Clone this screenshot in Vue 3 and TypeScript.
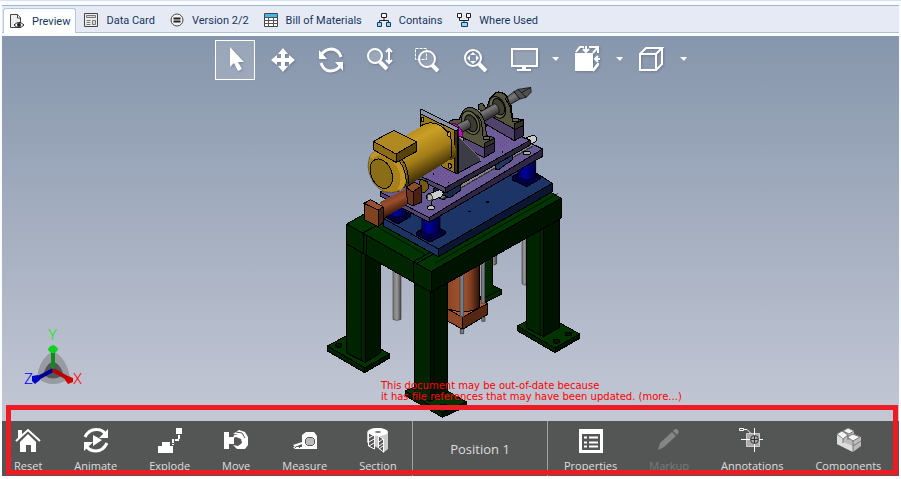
<script setup lang="ts">
import { ref } from 'vue'

interface Item {
  label: string
  icon: string
  disabled?: boolean
}

const activeTab = ref('Preview')
const activeTool = ref('Select')

const tabs: Item[] = [
  {
    label: 'Preview',
    icon: '<path d="M1.500 1.500h7l3 3v10h-10z" fill="#eee" stroke="#444"/><path d="M8.500 1.500v3.500h3" fill="#fff" stroke="#444"/><path d="M5 12q5-5 10 0q-5 5-10 0z" fill="#fff" stroke="#222"/><circle cx="10" cy="12" r="2" fill="#222"/>',
  },
  {
    label: 'Data Card',
    icon: '<path d="M1.500 1.500h13v13h-13z" fill="#eee" stroke="#444"/><path d="M3.500 3.500h9v2h-9zM3.500 8.500h4M3.500 10.500h4M3.500 12.500h4M9.500 8.500h3v4h-3z" fill="#ddd" stroke="#777"/>',
  },
  {
    label: 'Version 2/2',
    icon: '<circle cx="8" cy="8" r="6" fill="#f4f4f4" stroke="#444"/><path d="M4.500 6.500h7M4.500 9.500h7" stroke="#222" stroke-width="2"/>',
  },
  {
    label: 'Bill of Materials',
    icon: '<path d="M1.500 1.500h13v13h-13z" fill="#fff" stroke="#444"/><path d="M2 2h12v3H2z" fill="#45b5e5"/><path d="M1.500 5.500h13M1.500 8.500h13M1.500 11.500h13M5.500 5v10M10.500 5v10" stroke="#555"/>',
  },
  {
    label: 'Contains',
    icon: '<path d="M8 6v3M3.500 11V8.500h9V11" fill="none" stroke="#222"/><path d="M5.500 1.500h5v4h-5z" fill="#fff" stroke="#222"/><path d="M1.500 10.500h4v4h-4zM10.500 10.500h4v4h-4z" fill="#8fd8f8" stroke="#12405c"/>',
  },
  {
    label: 'Where Used',
    icon: '<path d="M3.500 6v2.500h9V6M8 9v2" fill="none" stroke="#222"/><path d="M1.500 1.500h4v4h-4zM10.500 1.500h4v4h-4z" fill="#fff" stroke="#222"/><path d="M5.500 10.500h6v4h-6z" fill="#8fd8f8" stroke="#12405c"/>',
  },
]

const tools: Item[] = [
  { label: 'Select', icon: '<path d="M15 7v20l4-4 4 8 4-2-4-7h6z" fill="#fff"/>' },
  {
    label: 'Pan',
    icon: '<path d="M20 8l5 6h-3v4h4v-3l6 5-6 5v-3h-4v4h3l-5 6-5-6h3v-4h-4v3l-6-5 6-5v3h4v-4h-3z" fill="#fff"/>',
  },
  {
    label: 'Rotate',
    icon: '<path d="M10 15q4-6 11-6q7 1 9 8M30 25q-4 6-11 6q-6 0-9-8" fill="none" stroke="#fff" stroke-width="3"/><path d="M8 10v9h8zM32 31v-9h-8z" fill="#fff"/>',
  },
  {
    label: 'Zoom',
    icon: '<circle cx="16" cy="16" r="7" fill="#ffffff33" stroke="#fff" stroke-width="2"/><path d="M21 22l7 7" stroke="#fff" stroke-width="4"/><path d="M30 10v12M27 12l3-3 3 3M27 20l3 3 3-3" fill="none" stroke="#fff" stroke-width="2"/>',
  },
  {
    label: 'Zoom to area',
    icon: '<circle cx="20" cy="19" r="8" fill="#ffffff22" stroke="#fff" stroke-width="2"/><path d="M25 25l6 6" stroke="#fff" stroke-width="4"/><path d="M8.500 8.500h11v11h-11z" fill="none" stroke="#fff" stroke-dasharray="3 1"/>',
  },
  {
    label: 'Zoom to fit',
    icon: '<circle cx="18" cy="18" r="8" fill="none" stroke="#fff" stroke-width="2"/><path d="M18 12l3 3h-6zM18 24l3-3h-6zM12 18l3-3v6zM24 18l-3-3v6z" fill="#fff"/><path d="M24 24l7 7" stroke="#fff" stroke-width="4"/>',
  },
]

const views: Item[] = [
  {
    label: 'Display',
    icon: '<path d="M9 9h25v17H9z" fill="#ffffff22" stroke="#fff" stroke-width="2"/><path d="M19 27h4v2h5v2H14v-2h5z" fill="#fff"/>',
  },
  {
    label: 'View orientation',
    icon: '<path d="M8 13h18v18H8z" fill="#fff"/><path d="M9 12l4-5h4M22 7h9v6M31 23v2l-5 6M26 13l5-6M26 30l5-6" fill="none" stroke="#fff" stroke-width="2"/><path d="M19 6v5M16 9l3 3 3-3M33 19h-5M31 16l-3 3 3 3" fill="none" stroke="#fff" stroke-width="2"/>',
  },
  {
    label: 'Display style',
    icon: '<path d="M9 14h16v16H9zM9 14l6-6h16l-6 6M31 8v16l-6 6" fill="none" stroke="#fff" stroke-width="2"/>',
  },
]

const motion: Item[] = [
  {
    label: 'Reset',
    icon: '<path d="M1 14L13 3l12 11" fill="none" stroke="#fff" stroke-width="2"/><path d="M3 3h4v5l-4 3zM5 15l8-8 8 8v10h-5v-7h-5v7H5z" fill="#fff"/>',
  },
  {
    label: 'Animate',
    icon: '<path d="M2 10Q6 2 14 2.500q5 0 8 4M24 16q-4 8-11 8q-6 0-9-4" fill="none" stroke="#fff" stroke-width="3"/><path d="M25 2v9h-9zM1 24v-9h9zM10 8l9 5-9 6z" fill="#fff"/>',
  },
  {
    label: 'Explode',
    icon: '<path d="M19 1h6v6h-6zM1 19h4v-4h8v4h3v7H1z" fill="#fff"/><path d="M22 8v5h-6v5" fill="none" stroke="#fff" stroke-width="2" stroke-dasharray="4 1"/>',
  },
  {
    label: 'Move',
    icon: '<path d="M1 5h5v5h5v7H6v5H1zM10 7l6-4 6 2 3 5v8l-3 4h-8l-4-4 5 1 4-3-1-4-5-2-3 1 1-3 4-1z" fill="#fff"/><path d="M13 5l6 1 3 5" fill="none" stroke="#555" />',
  },
  {
    label: 'Measure',
    icon: '<path d="M10 8l4-3h8l3 4v13H10zM1 18l9-3v2l-7 3zM1 20h23v2H3z" fill="#fff"/><path d="M15.500 10.500h5l2 2v4l-2 2h-5l-2-2v-4z" fill="#bbb" stroke="#555"/><path d="M3 21l2-2m2 2l2-2" stroke="#555"/>',
  },
  {
    label: 'Section',
    icon: '<path d="M2 5q2-4 10-4t11 5v16l-5 4V13h-5v8l-4-2v-6L2 16z" fill="#ccc"/><ellipse cx="13" cy="5" rx="10" ry="4" fill="#fff"/><path d="M3.500 6l6 3v13l-6-3zM13.500 9l5 3v13l-5-4z" fill="#555" stroke="#fff"/><path d="M4 11l5-3M4 15l5-3M4 19l5-3M14 15l4-3M14 19l4-3M14 22l4-3" stroke="#fff"/><ellipse cx="13" cy="5" rx="3" ry="1" fill="#777"/>',
  },
]

const details: Item[] = [
  {
    label: 'Properties',
    icon: '<path d="M1 2h24v24H1z" fill="#fff"/><path d="M4 7h18v16H4z" fill="#555"/><path d="M6 10.500h3m2 0h9M6 15.500h3m2 0h9M6 19.500h3m2 0h9" stroke="#fff" stroke-width="2"/>',
  },
  {
    label: 'Markup',
    icon: '<path d="M2 23l2-7L16 5l4 4L8 20zM17 4l2-2h2l2 3-2 3z" fill="#858585"/>',
    disabled: true,
  },
  {
    label: 'Annotations',
    icon: '<path d="M7.500 6.500h13v13h-13z" fill="#aaa" stroke="#ccc"/><path d="M2 12.500h22M15.500 1v24" stroke="#fff"/><circle cx="15.500" cy="12.500" r="4" fill="#aaa" stroke="#333"/><path d="M12 12.500h7M15.500 9v7" stroke="#333"/><path d="M.500 1.500h4v2h-4zM5 2.500h3l4 4" fill="none" stroke="#fff"/>',
  },
  {
    label: 'Components',
    icon: '<path d="M2 7l11-6 6 3v3l7 3v9l-8 6L2 17z" fill="#bbb"/><path d="M2 7l5-3 6 4-5 4zM8 4l5-3 6 3-5 3zM12 10l6-3 7 3-7 4z" fill="#f4f4f4" stroke="#777"/><path d="M2 8l6 4v3l10 4v6L2 17z" fill="#ddd"/><path d="M13 8v5M18 14v11M8 12v4M18 19l8-5" stroke="#777"/>',
  },
]
</script>

<template>
  <main class="app">
    <nav class="tabs">
      <button
        v-for="tab in tabs"
        :key="tab.label"
        class="tab"
        :class="{ active: tab.label === activeTab }"
        @click="activeTab = tab.label"
      >
        <svg class="tab-icon" viewBox="0 0 16 16" v-html="tab.icon"></svg>
        <span>{{ tab.label }}</span>
      </button>
    </nav>

    <section class="viewer">
      <div class="toolbar">
        <button
          v-for="tool in tools"
          :key="tool.label"
          class="tool"
          :class="{ selected: tool.label === activeTool }"
          :aria-label="tool.label"
          @click="activeTool = tool.label"
        >
          <svg viewBox="0 0 40 40" v-html="tool.icon"></svg>
        </button>
        <div v-for="view in views" :key="view.label" class="split">
          <button class="tool" :aria-label="view.label">
            <svg viewBox="0 0 40 40" v-html="view.icon"></svg>
          </button>
          <button class="drop" :aria-label="view.label + ' options'">
            <svg viewBox="0 0 14 40"><path d="M4 17h7l-3 4z" fill="#fff" /></svg>
          </button>
        </div>
      </div>

      <div class="stage">
        <svg class="model" viewBox="-30 6 843 1017" stroke-linejoin="round">
          <defs>
            <linearGradient id="motor" gradientUnits="userSpaceOnUse" x1="250" y1="145" x2="325" y2="285">
              <stop offset="0" stop-color="#a98218" />
              <stop offset=".3" stop-color="#c99f26" />
              <stop offset=".65" stop-color="#a27c18" />
              <stop offset="1" stop-color="#3a2b04" />
            </linearGradient>
            <linearGradient id="copper" x1="0" x2="1">
              <stop offset="0" stop-color="#8a4526" />
              <stop offset=".5" stop-color="#a4552f" />
              <stop offset=".75" stop-color="#7a3c20" />
              <stop offset="1" stop-color="#2e1307" />
            </linearGradient>
            <linearGradient id="arm" gradientUnits="userSpaceOnUse" x1="215" y1="340" x2="240" y2="395">
              <stop offset="0" stop-color="#7a3c20" />
              <stop offset=".4" stop-color="#9a4e2c" />
              <stop offset="1" stop-color="#2e1307" />
            </linearGradient>
            <linearGradient id="steel" x1="0" x2="1">
              <stop offset="0" stop-color="#777" />
              <stop offset=".5" stop-color="#999" />
              <stop offset="1" stop-color="#444" />
            </linearGradient>
            <linearGradient id="shaft" gradientUnits="userSpaceOnUse" x1="490" y1="80" x2="510" y2="118">
              <stop offset="0" stop-color="#555" />
              <stop offset=".35" stop-color="#777" />
              <stop offset="1" stop-color="#222" />
            </linearGradient>
            <linearGradient id="post" x1="0" x2="1">
              <stop offset="0" stop-color="#000060" />
              <stop offset=".4" stop-color="#0000a0" />
              <stop offset="1" stop-color="#000038" />
            </linearGradient>
            <pattern id="dots" width="12" height="12" patternUnits="userSpaceOnUse">
              <path d="M1 2h3M7 8h3" stroke="#86349c" stroke-width="3" />
            </pattern>
          </defs>

          <!-- Stand: rods, cylinder, legs and beams -->
          <g transform="translate(0 420)" stroke="#000" stroke-width="3">
            <g fill="url(#steel)" stroke="#444" stroke-width="2">
              <path d="M219 140v158q11 7 24 0V140z" />
              <path d="M606 30v161q6 6 16 4V30z" />
              <path d="M507 90v42q11 7 23 0V90z" />
            </g>
            <path d="M487 90h30v105l28 14v14l-50 25-15-8 7-30z" fill="#002600" />
            <path d="M495 232l50-24" />
            <path d="M382 120h96v145q-40 20-96 5z" fill="url(#copper)" />
            <path d="M382 267l46 25 75-42-25-15v28q-38 22-96 4z" fill="#b36037" />
            <path d="M382 267l46 25v36l-46-25z" fill="#8e4827" />
            <path d="M428 292l75-42v33l-75 45z" fill="#562813" />
            <g fill="#777b84" stroke="#333" stroke-width="2">
              <path d="M420 120h11v170h-11zM484 100h10v150h-10zM421 328h10v13h-10zM485 292h10v12h-10z" />
            </g>

            <path d="M22 378l60-32 98 40 29 16-75 41z" fill="#003300" />
            <path d="M22 378l112 65v15L22 393z" fill="#002200" />
            <path d="M134 443l75-41v12l-75 44z" fill="#001400" />
            <path d="M80 60h55v367l-55-28z" fill="#002400" />
            <path d="M135 60h45v340l-45 27z" fill="#001500" />
            <path d="M124 95v328" stroke-width="2" />
            <ellipse cx="56" cy="376" rx="10" ry="6" fill="#001800" />

            <path d="M592 318l28-14 98 4 61 34-74 42z" fill="#003300" />
            <path d="M592 318l113 66v14l-113-66z" fill="#002200" />
            <path d="M705 384l74-42v13l-74 43z" fill="#001400" />
            <path d="M620 0h50v350l-50-26z" fill="#002400" />
            <path d="M670 0h49v322l-49 28z" fill="#001200" />
            <path d="M660 25v318" stroke-width="2" />
            <ellipse cx="746" cy="342" rx="10" ry="6" fill="#001800" />
            <ellipse cx="709" cy="364" rx="10" ry="6" fill="#001800" />

            <path d="M255 512l28-10 100 12 57 32-73 31z" fill="#003300" />
            <path d="M255 512l112 65v15l-112-66z" fill="#002200" />
            <path d="M367 577l73-31v13l-73 33z" fill="#001400" />
            <path d="M283 170h47v375l-47-27z" fill="#002400" />
            <path d="M330 170h53v347l-53 28z" fill="#001200" />
            <path d="M342 215v325" stroke-width="2" />
            <ellipse cx="370" cy="558" rx="11" ry="6" fill="#001800" />

            <path d="M80 12l60-34L690-85l33 20-390 220z" fill="#003400" />
            <path d="M80 12l253 143v62L80 72z" fill="#002500" />
            <path d="M333 155L723-65v60L333 217z" fill="#001300" />
            <path d="M130 38l58-30M130 38v60M280 125l54-30M280 125v60M290 130l50-28M138 44v57" />
            <path d="M170 20l150 86M345 130L715-80" stroke-width="2" />
          </g>

          <!-- Base plate -->
          <g stroke="#000" stroke-width="3">
            <path d="M190 415l350-205 157 100-342 197z" fill="#1c3466" />
            <path d="M190 415l165 92v23l-165-92z" fill="#1c3260" />
            <path d="M355 507l342-197v25L355 530z" fill="#0a1632" />
            <path d="M445 395h9M497 366h9" stroke-width="4" />

            <path d="M198 404l36-22 38 20v8l-38 22-36-20z" fill="#00003c" />
            <path d="M208 370v34q25 14 50 0v-34z" fill="url(#post)" stroke-width="2" />
            <path d="M290 456l42-24 44 22v8l-44 24-42-20z" fill="#000048" />
            <path d="M305 395v58q26 20 55 0v-58z" fill="url(#post)" stroke-width="2" />
            <path d="M577 290l42-24 43 22v8l-42 24-43-20z" fill="#000048" />
            <path d="M594 230v59q26 20 53 0v-59z" fill="url(#post)" stroke-width="2" />
            <path d="M300 457h5M330 474h5M362 454h5M587 292h5M618 309h5M649 289h5" stroke-width="7" />

            <!-- Carriage plates and guide rails -->
            <path d="M180 336l340-200 148 71-341 206z" fill="#685a94" />
            <path d="M180 336l147 77v14l-147-79z" fill="#524571" />
            <path d="M327 413l341-206v22L327 427z" fill="#302747" />
            <path d="M340 326l80-42 15 28-65 48-30-14zM515 230l60-30v42l-45 28-15-9z" fill="#182b50" />
            <path d="M360 352l275-160" stroke="#333" stroke-width="18" />
            <path d="M360 350l275-160" stroke="#85858c" stroke-width="14" />
            <path d="M330 352l28-11M625 183l14-6" stroke="#000" stroke-width="25" stroke-linecap="round" />
            <path d="M330 352l28-11M625 183l14-6" stroke="#ccc" stroke-width="19" stroke-linecap="round" />
            <ellipse cx="329" cy="353" rx="8" ry="10" fill="#aaa" stroke="#444" />
            <path d="M333 364v16" />
            <ellipse cx="333" cy="383" rx="11" ry="6" fill="#bbb" />
            <ellipse cx="621" cy="219" rx="11" ry="6" fill="#aaa" />
            <path d="M380 320l40-22v34l-30 21-22-8z" fill="#172a4c" />
            <path d="M525 250l53-29v17l-42 31-11-5z" fill="#203860" />
            <path d="M278 278l225-142 128 44-254 143z" fill="#6c5c98" />
            <path d="M278 278l99 45v16l-99-50z" fill="#52446f" />
            <path d="M377 323l254-143v15L377 339z" fill="#2c243d" />
            <path d="M335 278l35-17 42 31-42 18-35-18zM525 188l35-20 25 14-40 22z" fill="url(#dots)" stroke="none" />
            <path d="M338 282h3M384 307h3M547 216h3M465 250h3M579 181h3" stroke-width="5" />

            <!-- Bearing blocks and spindle -->
            <path d="M475 115l30-20 78 50v37l-78-45z" fill="#51436e" />
            <path d="M583 145l27-18v40l-27 15z" fill="#2d263c" />
            <path d="M475 75l12-6 12 18 10-30q22-35 50-12 17 14 18 70l33 5v12l-27 15-108-60z" fill="#55553e" />
            <path d="M583 132l27-13v18l-27 12z" fill="#303024" />
            <path d="M508 60q25-38 47-15 20 22 24 79" fill="none" />
            <ellipse cx="532" cy="82" rx="23" ry="34" transform="rotate(-25 532 82)" fill="#69694e" />
            <ellipse cx="536" cy="80" rx="16" ry="26" transform="rotate(-25 536 80)" fill="#404032" />
            <path d="M562 50l20-15 18 22-30 17z" fill="url(#shaft)" stroke-width="2" />
            <path d="M582 35l12-7 38-6 2 14-15 16-19 5z" fill="#505050" stroke-width="2" />
            <path d="M594 28l10 10 28-15M604 38l15 14" fill="none" stroke-width="2" />
            <path d="M475 99l49-28q14 7 14 27l-49 29z" fill="url(#shaft)" stroke-width="2" />

            <path d="M430 170l62 30v33l-62-34z" fill="#574878" />
            <path d="M492 200l31-18v33l-31 18z" fill="#2d263c" />
            <path d="M388 124l14-6 16 0q12-42 38-35 27 8 38 42l6 42 22 6v14l-30 17-92-45z" fill="#55553e" />
            <path d="M492 190l31-15v14l-31 15z" fill="#303024" />
            <ellipse cx="452" cy="128" rx="25" ry="37" transform="rotate(-25 452 128)" fill="#68684d" />
            <ellipse cx="453" cy="130" rx="17" ry="27" transform="rotate(-25 453 130)" fill="#3b3b2f" />
            <ellipse cx="500" cy="174" rx="10" ry="6" fill="#6a6a50" />
            <ellipse cx="587" cy="120" rx="10" ry="6" fill="#6a6a50" />
            <path d="M472 105l13 20 3 42M555 55l17 28 2 31" fill="none" />
            <path d="M412 133l30-15q13 8 9 26l-29 15z" fill="url(#shaft)" stroke-width="2" />
            <path d="M392 130q12-3 24 9t12 29l-13 3-22-36z" fill="#d000d0" stroke="#600060" />
            <path d="M414 169l67 65v10l-67 35z" fill="#3b3c45" />
            <path d="M414 169l67 65v10" fill="none" stroke="#777" />

            <!-- Motor -->
            <path d="M302 87l113 56v137l-12-4-90-80-11-90z" fill="#8795a6" />
            <path d="M300 101l108 52v127l-40-19-68-80z" fill="#9b7818" />
            <path d="M403 153l10-4v131l-10-2z" fill="#3b2e08" />
            <path d="M168 215L300 142q55-35 92 30t-6 69L235 335z" fill="url(#motor)" stroke="none" />
            <path d="M300 140q28-20 58-5 27 15 37 48l-2 50" fill="none" />
            <ellipse cx="388" cy="163" rx="5" ry="8" fill="#d0a630" />
            <ellipse cx="308" cy="118" rx="4" ry="7" fill="#d0a630" />
            <ellipse cx="389" cy="258" rx="5" ry="7" fill="#b38d22" />
            <path d="M146 242q4-28 29-30 60-7 82 54 15 48-20 67-48 17-77-25-21-35-14-66z" fill="#a98119" stroke-width="1" />
            <path d="M154 234q14-24 47-10 38 20 46 62 5 28-10 43" fill="none" stroke="#d4aa32" stroke-width="13" opacity=".55" />
            <ellipse cx="184" cy="281" rx="31" ry="46" transform="rotate(-23 184 281)" fill="#8b6c17" />
            <path d="M237 242q25 31 21 76M246 237q24 34 18 76" fill="none" />
            <path d="M160 184l62-33 68 35-62 36z" fill="#b08a20" />
            <path d="M160 184l68 38v25l-68-38z" fill="#8e6c15" />
            <path d="M228 222l62-36v28l-62 34z" fill="#594208" />

            <!-- Linear actuator -->
            <path d="M302 298l20 7 5 20-15 14-20-10z" fill="#76590d" />
            <path d="M180 366l85-42 25 33-97 56z" fill="url(#arm)" stroke="none" />
            <path d="M258 321l25-14 22 11v48l-26 12-16-8z" fill="#6a351e" />
            <path d="M258 321l25-14 22 11-27 18z" fill="#8d4c2d" />
            <path d="M279 335l26-17v48l-26 12z" fill="#4a2010" />
            <path d="M132 370l20-11 37 21-14 10z" fill="#98502d" />
            <path d="M132 370l43 20v50l-43-22z" fill="#80431f" />
            <path d="M175 390l14-10v48l-14 12z" fill="#40200f" />
          </g>
        </svg>

        <svg class="triad" viewBox="0 0 60 60" aria-label="Axis orientation">
          <path d="M29 17Q43 24 46 44Q29 56 13 44Q15 25 29 17z" fill="#999ba3" />
          <path d="M29 27Q38 32 39 41Q29 48 20 41Q20 32 29 27z" fill="#55575c" />
          <path d="M29 17v21" stroke="#128a20" stroke-width="4" />
          <path d="M29 36L14 44" stroke="#000090" stroke-width="4" />
          <path d="M29 36l16 9" stroke="#b80000" stroke-width="4" />
          <path d="M24 16q0-3 5-5 5 2 5 5l-3 3h-4z" fill="#10d020" />
          <path d="M8 42l6-1 2 5-5 4-3-3z" fill="#0000c8" />
          <path d="M44 42l5 2v4l-5 2-3-4z" fill="#d00000" />
          <g font-family="Roboto" font-weight="300" font-size="15">
            <text x="24" y="6" fill="#00f000">Y</text>
            <text x="0" y="50" fill="#0000ff">Z</text>
            <text x="49" y="50" fill="#ff0000">X</text>
          </g>
        </svg>

        <p class="notice">This document may be out-of-date because<br />it has file references that may have been updated. (more...)</p>
      </div>

      <footer class="commands">
        <div class="group">
          <button v-for="item in motion" :key="item.label" class="command">
            <svg viewBox="0 0 26 26" v-html="item.icon"></svg>
            <span>{{ item.label }}</span>
          </button>
        </div>
        <button class="position">Position 1</button>
        <div class="group wide">
          <button v-for="item in details" :key="item.label" class="command" :disabled="item.disabled">
            <svg viewBox="0 0 26 26" v-html="item.icon"></svg>
            <span>{{ item.label }}</span>
          </button>
        </div>
      </footer>
      <div class="highlight"></div>
    </section>
  </main>
</template>

<style>
body {
  margin: 0;
  background: #fff;
}
</style>

<style scoped>
.app {
  padding: 4px 2px 3px;
  border-top: 1px solid #d5e3f5;
  box-sizing: border-box;
  height: 100vh;
  display: flex;
  flex-direction: column;
  font-family: "Open Sans", "Noto Sans", sans-serif;
  background: #fbfcff;
}
button {
  font: inherit;
  color: inherit;
  border: 0;
  padding: 0;
  background: none;
}
.tabs {
  display: flex;
  align-items: stretch;
  height: 28px;
  box-sizing: border-box;
  background: #e6eaf5;
  border-top: 1px solid #9fb3ce;
  border-bottom: 1px solid #aebfd8;
  margin-bottom: 3px;
  padding-left: 1px;
  font-family: Roboto, sans-serif;
  font-size: 11px;
  color: #17365f;
}
.tab {
  display: flex;
  align-items: center;
  gap: 7px;
  padding: 2px 7px 0;
  white-space: nowrap;
}
.tab.active {
  background: #fff;
  border: 1px solid #b6c8e0;
  border-bottom: 0;
  border-radius: 3px 3px 0 0;
  margin: 2px 0 -1px;
  padding: 0 5px;
}
.tab-icon {
  width: 16px;
  height: 16px;
}
.viewer {
  position: relative;
  flex: 1;
  display: flex;
  flex-direction: column;
  background: linear-gradient(#8696ac, #c4c8d5 88%);
  overflow: hidden;
}
.toolbar {
  display: flex;
  justify-content: center;
  gap: 8px;
  padding: 4px 0 2px 4px;
}
.tool {
  width: 40px;
  height: 40px;
}
.tool svg {
  display: block;
  width: 40px;
  height: 40px;
  filter: drop-shadow(1px 1px 1px #56627688);
}
.tool.selected {
  background: #ffffff26;
  outline: 1px solid #fff;
  outline-offset: -1px;
}
.split {
  display: flex;
  gap: 5px;
}
.split + .split {
  margin-left: -3px;
}
.drop {
  width: 14px;
}
.drop svg {
  display: block;
  width: 14px;
  height: 40px;
}
.stage {
  position: relative;
  flex: 1;
  display: flex;
  justify-content: center;
}
.model {
  width: 281px;
  height: 339px;
  shape-rendering: crispEdges;
}
.triad {
  position: absolute;
  left: 22px;
  bottom: 27px;
  width: 60px;
  height: 60px;
  overflow: visible;
}
.notice {
  position: absolute;
  left: 379px;
  bottom: 19px;
  margin: 0;
  font: 10px/11px "DejaVu Sans", sans-serif;
  color: #f00;
  white-space: nowrap;
}
.commands {
  display: grid;
  grid-template-columns: minmax(0, 410fr) minmax(0, 136fr) minmax(0, 351fr);
  height: 55px;
  overflow: hidden;
  background: #545655;
  color: #ddd;
  font-size: 11px;
}
.group {
  display: flex;
  gap: 32px;
  padding-left: 12px;
}
.group.wide {
  padding-left: 16px;
}
.command {
  display: flex;
  flex-direction: column;
  align-items: center;
  gap: 5px;
  padding-top: 6px;
  line-height: 16px;
  white-space: nowrap;
}
.command svg {
  width: 26px;
  height: 26px;
  flex: none;
  overflow: visible;
}
.command:disabled {
  color: #7a7b7b;
}
.position {
  border: solid #a0a1a1;
  border-width: 0 1px;
  font-size: 13px;
}
.highlight {
  position: absolute;
  inset: auto 1px 1px 4px;
  height: 60px;
  border: 5px solid #ed1c24;
  pointer-events: none;
}
</style>
